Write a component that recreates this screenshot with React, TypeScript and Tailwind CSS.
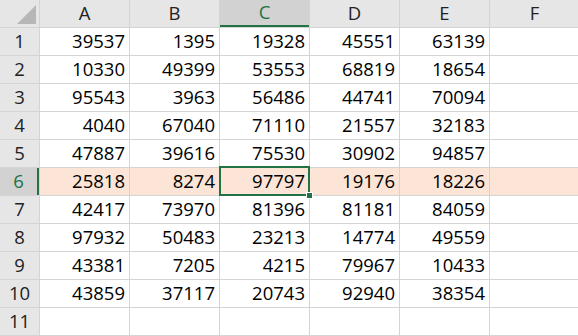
import React from 'react';

const columns = ['A', 'B', 'C', 'D', 'E', 'F'];

const rows: (number | null)[][] = [
  [39537, 1395, 19328, 45551, 63139, null],
  [10330, 49399, 53553, 68819, 18654, null],
  [95543, 3963, 56486, 44741, 70094, null],
  [4040, 67040, 71110, 21557, 32183, null],
  [47887, 39616, 75530, 30902, 94857, null],
  [25818, 8274, 97797, 19176, 18226, null],
  [42417, 73970, 81396, 81181, 84059, null],
  [97932, 50483, 23213, 14774, 49559, null],
  [43381, 7205, 4215, 79967, 10433, null],
  [43859, 37117, 20743, 92940, 38354, null],
  [null, null, null, null, null, null],
];

const activeRow = 5;
const activeCol = 2;

export default function App() {
  return (
    <div
      className="w-[578px] h-[336px] overflow-hidden bg-white text-[18.5px] text-black"
      style={{ fontFamily: '"Open Sans", "Liberation Sans", sans-serif' }}
    >
      <div className="grid grid-cols-[39px_89px_89px_89px_89px_89px_89px] grid-rows-[27px_repeat(11,27px)] gap-px bg-[#d4d4d4] pb-px w-max">
        {/* corner */}
        <div className="bg-[#e6e6e6] relative">
          <svg className="absolute left-[17px] top-[5px]" width="19" height="19" viewBox="0 0 19 19">
            <polygon points="19,0 19,19 0,19" fill="#b7b7b7" />
          </svg>
        </div>
        {columns.map((col, i) => (
          <div
            key={col}
            className={
              i === activeCol
                ? 'bg-[#d2d2d2] text-[#217346] flex items-center justify-center border-b-2 border-[#217346] leading-none'
                : 'bg-[#e6e6e6] text-[#222] flex items-center justify-center leading-none'
            }
          >
            {col}
          </div>
        ))}

        {rows.map((row, r) => (
          <React.Fragment key={r}>
            <div
              className={
                r === activeRow
                  ? 'bg-[#d2d2d2] text-[#217346] flex items-center justify-center border-r-2 border-[#217346] leading-none'
                  : 'bg-[#e6e6e6] text-[#222] flex items-center justify-center leading-none'
              }
            >
              {r + 1}
            </div>
            {row.map((val, c) => {
              const active = r === activeRow && c === activeCol;
              return (
                <div
                  key={c}
                  className={
                    (r === activeRow ? 'bg-[#fce4d6] ' : 'bg-white ') +
                    (active ? 'z-10 ' : '') +
                    'relative flex items-center justify-end pr-[4px] leading-none'
                  }
                >
                  {val}
                  {active && (
                    <>
                      <div className="absolute -top-[2px] -left-px -right-px -bottom-px border-2 border-[#217346]" />
                      <div className="absolute -right-[4px] -bottom-[4px] w-[7px] h-[7px] bg-[#217346] border border-white" />
                    </>
                  )}
                </div>
              );
            })}
          </React.Fragment>
        ))}
      </div>
    </div>
  );
}
